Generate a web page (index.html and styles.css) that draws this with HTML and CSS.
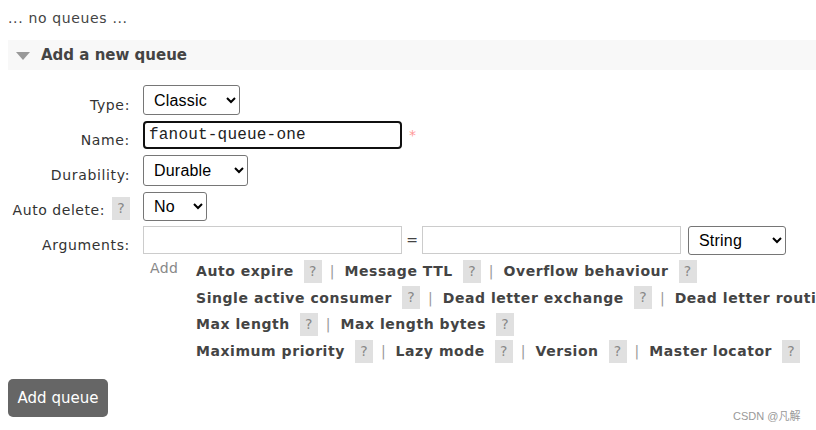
FILE: index.html
```html
<!DOCTYPE html>
<html>
<head>
<meta charset="utf-8">
<link rel="stylesheet" href="styles.css">
</head>
<body>
<p class="empty">... no queues ...</p>
<div class="section">
  <h2 class="section-title"><span class="tri"></span>Add a new queue</h2>
  <div class="form">
    <label class="lbl lbl-type">Type:</label>
    <div class="ctl ctl-type"><select class="sel sel-type"><option>Classic</option></select></div>

    <label class="lbl lbl-name">Name:</label>
    <div class="ctl ctl-name"><input class="name-input" type="text" value="fanout-queue-one"><span class="req">*</span></div>

    <label class="lbl lbl-dur">Durability:</label>
    <div class="ctl ctl-dur"><select class="sel sel-dur"><option>Durable</option></select></div>

    <label class="lbl lbl-auto"><span class="auto-text">Auto delete:</span><span class="help">?</span></label>
    <div class="ctl ctl-auto"><select class="sel sel-no"><option>No</option></select></div>

    <label class="lbl lbl-args">Arguments:</label>
    <div class="ctl ctl-args">
      <div class="arg-inputs">
        <input class="arg-input" type="text"><span class="eq">=</span><input class="arg-input" type="text"><select class="sel sel-str"><option>String</option></select>
      </div>
      <div class="arg-add">
        <span class="add-link">Add</span>
        <div class="arg-list">
          <div class="arg-line"><b>Auto expire</b><span class="help">?</span><span class="sep">|</span><b>Message TTL</b><span class="help">?</span><span class="sep">|</span><b>Overflow behaviour</b><span class="help">?</span></div>
          <div class="arg-line"><b>Single active consumer</b><span class="help">?</span><span class="sep">|</span><b>Dead letter exchange</b><span class="help">?</span><span class="sep">|</span><b>Dead letter routing key</b><span class="help">?</span></div>
          <div class="arg-line"><b>Max length</b><span class="help">?</span><span class="sep">|</span><b>Max length bytes</b><span class="help">?</span></div>
          <div class="arg-line"><b>Maximum priority</b><span class="help">?</span><span class="sep">|</span><b>Lazy mode</b><span class="help">?</span><span class="sep">|</span><b>Version</b><span class="help">?</span><span class="sep">|</span><b>Master locator</b><span class="help">?</span></div>
        </div>
      </div>
    </div>
  </div>
  <button class="btn">Add queue</button>
</div>
<div class="watermark">CSDN @凡解</div>
</body>
</html>
```

FILE: styles.css
```css
html, body {
  overflow: hidden;
}
body {
  margin: 0;
  padding: 0 8px;
  width: 800px;
  height: 430px;
  position: relative;
  font-family: "DejaVu Sans", Verdana, sans-serif;
  font-size: 14px;
  letter-spacing: 0.65px;
  color: #444;
  background: #fff;
}
.empty {
  margin: 0;
  padding-top: 9px;
  height: 31px;
  line-height: 18px;
  color: #444;
}
.section-title {
  margin: 0;
  height: 30px;
  background: #f8f8f8;
  display: flex;
  align-items: center;
  font-size: 15px;
  font-weight: bold;
  letter-spacing: 0;
  color: #444;
  white-space: nowrap;
  width: 808px;
}
.tri {
  width: 0;
  height: 0;
  border-left: 7px solid transparent;
  border-right: 7px solid transparent;
  border-top: 8px solid #999;
  margin: 2px 11px 0 8px;
}
.form {
  display: grid;
  grid-template-columns: 122px 660px;
  column-gap: 13px;
  margin-top: 15px;
}
.lbl {
  text-align: right;
  color: #333;
  white-space: nowrap;
  line-height: 18px;
}
.lbl-type { padding-top: 11px; }
.lbl-name { padding-top: 10px; }
.lbl-dur { padding-top: 11px; }
.lbl-auto {
  display: flex;
  justify-content: flex-end;
  align-items: flex-start;
  padding-top: 5px;
  letter-spacing: 0.55px;
}
.auto-text { padding-top: 4px; }
.lbl-args { padding-top: 10px; }
.ctl-type { margin-bottom: 6px; }
.ctl-name { margin-bottom: 6px; }
.ctl-dur { margin-bottom: 6px; }
.ctl-auto { margin-bottom: 5px; }
.ctl { display: flex; align-items: flex-start; }
.ctl-args { display: block; }
.sel {
  font-family: "Liberation Sans", Arial, sans-serif;
  font-size: 16px;
  letter-spacing: 0.2px;
  color: #000;
  background: #fff;
  border: 1px solid #767676;
  border-radius: 3px;
  padding: 0 4px 0 6px;
  height: 30px;
  margin: 0;
}
.sel-type { width: 97px; }
.sel-dur { width: 105px; height: 31px; }
.sel-no { width: 64px; height: 29px; }
.sel-str { width: 98px; height: 29px; margin-left: 7px; }
.name-input {
  font-family: "Liberation Mono", "Courier New", monospace;
  font-size: 16px;
  letter-spacing: 0.2px;
  color: #222;
  width: 259px;
  height: 28px;
  box-sizing: border-box;
  border: 2px solid #101010;
  border-radius: 4px;
  padding: 0 4px;
  margin: 0;
  outline: none;
}
.req {
  color: #f99;
  margin-left: 7px;
  margin-top: 6px;
  font-size: 14px;
  letter-spacing: 0;
}
.arg-inputs {
  display: flex;
  align-items: flex-start;
  height: 29px;
}
.arg-input {
  width: 259px;
  height: 28px;
  box-sizing: border-box;
  border: 1px solid #ccc;
  padding: 0 4px;
  margin: 0;
}
.eq {
  width: 20px;
  text-align: center;
  color: #444;
  letter-spacing: 0;
  line-height: 28px;
}
.arg-add {
  display: flex;
  margin-top: 3px;
}
.add-link {
  flex: none;
  color: #888;
  width: 53px;
  padding-left: 7px;
  padding-top: 2px;
  box-sizing: border-box;
  letter-spacing: 0.4px;
}
.arg-list {
  flex: none;
  white-space: nowrap;
}
.arg-line {
  display: flex;
  align-items: center;
  height: 26.6px;
}
.arg-line > * {
  flex: none;
}
.arg-line b {
  color: #444;
  font-weight: bold;
  letter-spacing: 0.55px;
}
.help {
  display: inline-block;
  width: 18px;
  text-align: center;
  background: #e0e0e0;
  color: #888;
  font-weight: normal;
  letter-spacing: 0;
  padding: 3px 0;
  line-height: 17px;
  margin-left: 10px;
}
.lbl .help {
  margin-left: 7px;
}
.sep {
  color: #999;
  letter-spacing: 0;
  margin: 0 10px 0 8px;
}
.btn {
  margin-top: 15px;
  background: #666;
  color: #fff;
  border: none;
  border-radius: 5px;
  height: 38px;
  width: 100px;
  font-family: "DejaVu Sans", Verdana, sans-serif;
  font-size: 15px;
  letter-spacing: 0;
  padding: 0;
}
.watermark {
  position: absolute;
  left: 733px;
  top: 407px;
  font-family: "Liberation Sans", "Noto Sans CJK SC", sans-serif;
  font-size: 11px;
  letter-spacing: 0;
  color: #999;
}
```
